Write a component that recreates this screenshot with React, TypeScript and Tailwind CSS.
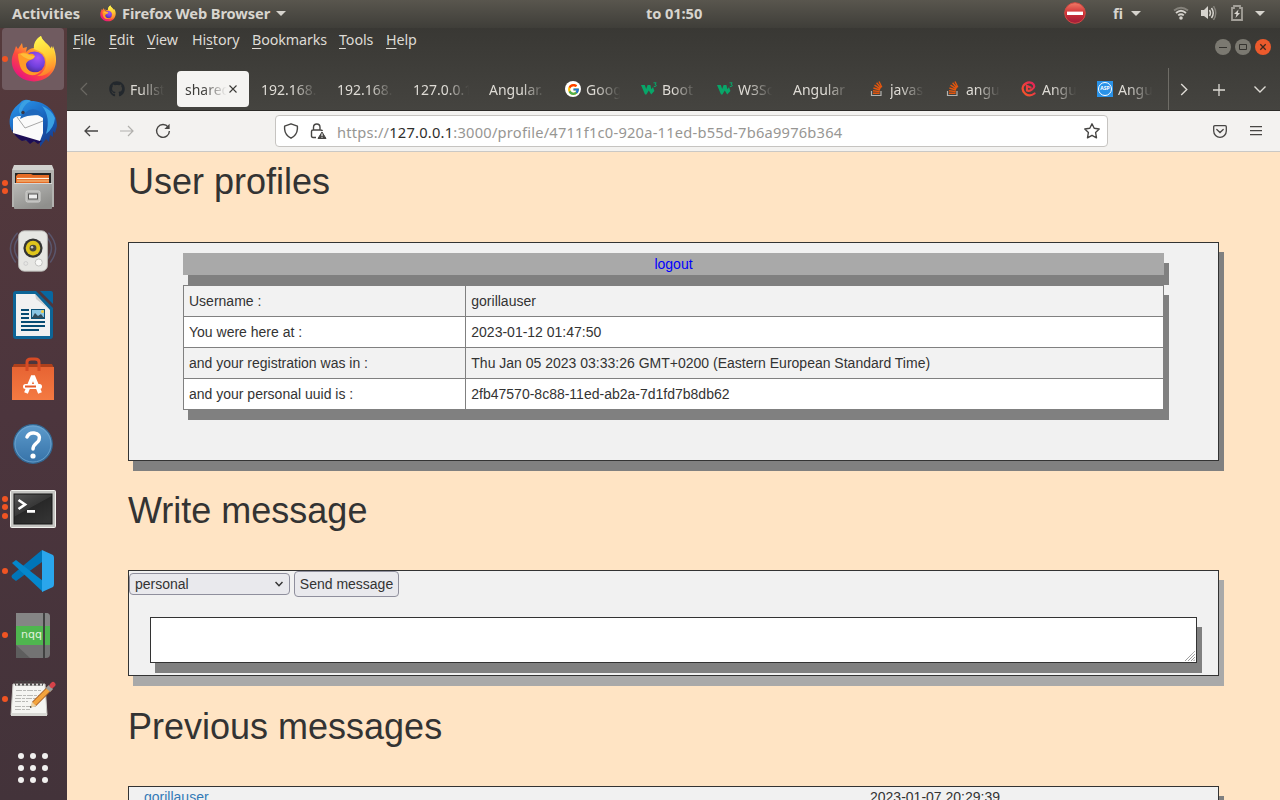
import React from "react";
import { FaGithub } from "react-icons/fa";
import { FcGoogle } from "react-icons/fc";

function FirefoxLogo({ id, className }: { id: string; className: string }) {
  return (
    <svg viewBox="0 0 46 48" className={className}>
      <defs>
        <linearGradient id={`${id}-body`} x1="0.85" y1="0.1" x2="0.25" y2="0.95">
          <stop offset="0" stopColor="#fff44f" />
          <stop offset="0.35" stopColor="#ffa32c" />
          <stop offset="0.65" stopColor="#ff4b3d" />
          <stop offset="1" stopColor="#e9167c" />
        </linearGradient>
        <radialGradient id={`${id}-globe`} cx="0.65" cy="0.3" r="0.8">
          <stop offset="0" stopColor="#a455f5" />
          <stop offset="0.55" stopColor="#7140dd" />
          <stop offset="1" stopColor="#452a8e" />
        </radialGradient>
        <linearGradient id={`${id}-flame`} x1="0.4" y1="0" x2="0.6" y2="1">
          <stop offset="0" stopColor="#fff650" />
          <stop offset="0.5" stopColor="#ffcd34" />
          <stop offset="1" stopColor="#ff7a2b" />
        </linearGradient>
      </defs>
      <path fill={`url(#${id}-body)`} d="M3 17L5 11L7 14L11 8L12 13L16 12L15 17C19 13 22 13 24 13C23 8 26 3 30 1C31 6 38 9 41 15L42 11C47 23 46 34 38 41C30 48 17 48 9 42C0 35-1 25 3 17Z" />
      <path fill={`url(#${id}-flame)`} d="M23 14C22 8 26 3 30 1C31 6 37 9 40 15L40 11C45 17 46 32 37 38C33 41 29 41 26 41C38 36 38 20 28 16Z" />
      <circle cx="23.5" cy="27" r="10.5" fill={`url(#${id}-globe)`} />
      <path fill="#ff9a27" d="M7 19C12 17 15 17 18 19C22 18 25 20 23 23C20 26 17 24 15 29C15 37 24 39 30 36C25 43 12 41 9 31C8 27 7 23 7 19Z" />
      <path fill="#ffbd38" d="M9 19Q14 17 18 20L24 21Q22 25 17 24Q13 23 9 19Z" />
    </svg>
  );
}

function ThunderbirdIcon() {
  return (
    <svg viewBox="0 0 48 48" className="size-12">
      <defs>
        <linearGradient id="tb" x1="0.2" y1="0" x2="0.8" y2="1">
          <stop offset="0" stopColor="#2a93e8" />
          <stop offset="0.5" stopColor="#1863bd" />
          <stop offset="1" stopColor="#163a8a" />
        </linearGradient>
      </defs>
      <path fill="url(#tb)" d="M11 4C14 0 18 0 22 2C36 2 48 12 48 27L46 34L44 32L44 38L41 36L40 43L37 40L31 48L31 42C18 44 8 39 3 32C-2 23 1 11 11 4Z" />
      <path fill="#1d0d55" d="M3 31L33 42L29 45L25 42L21 45L17 41L13 42Q6 38 3 31Z" />
      <path fill="#3aa0e3" d="M22 2C17 4 13 9 12 16C10 14 9 11 11 7C14 1 18 0 22 2ZM33 7Q42 18 37 35Q45 29 46 19Q43 11 33 7Z" />
      <path fill="#fafafa" d="M4 20Q6 17 11 17L29 16L34 19L34 34L31 42L4 34Z" />
      <path fill="none" stroke="#a8a8a8" strokeWidth="1" d="M8 18L16 29L34 22" />
      <path fill="#1f68bc" d="M12 17L20 11Q29 8 34 17Q22 14 11 20Z" />
      <circle cx="14" cy="13.5" r="1.7" fill="#3a3845" />
    </svg>
  );
}

function FilesIcon() {
  return (
    <svg viewBox="0 0 44 46" className="mb-[1px] h-[46px] w-11">
      <defs>
        <linearGradient id="fl" x1="0" y1="0" x2="0.6" y2="1">
          <stop offset="0" stopColor="#b9b9b7" />
          <stop offset="1" stopColor="#8f8f8c" />
        </linearGradient>
      </defs>
      <path fill="#d1d1ce" d="M3 1H41L43 6V43H1V6Z" />
      <path fill="#b3b3b0" d="M1 6H43V43H1Z" />
      <rect x="4" y="9" width="36" height="10" fill="#252525" />
      <path fill="#e66b25" d="M5 12L7 10H20L22 11H38V19H5Z" />
      <path stroke="#fff0dc" strokeWidth="1.2" d="M6 14.5H38" />
      <path stroke="#f6d096" strokeWidth="1" d="M6 17H38" />
      <rect x="3" y="19" width="38" height="26" rx="1" fill="url(#fl)" />
      <path stroke="#d6d6d4" d="M3 19.5H41" />
      <rect x="15" y="27" width="14" height="11" rx="1.5" fill="#b5b5b3" stroke="#d2d2d0" />
      <rect x="17.5" y="30" width="9" height="5" fill="#eee" stroke="#555" />
    </svg>
  );
}

function SpeakerIcon() {
  return (
    <svg viewBox="0 0 50 46" className="h-[46px] w-[50px]">
      <g fill="none" stroke="#667ca8" strokeWidth="1.5" opacity="0.45">
        <path d="M9 4Q-5 19 7 35" />
        <path d="M12 7Q0 19 11 33" />
        <path d="M41 4Q55 19 43 35" />
        <path d="M38 7Q50 19 39 33" />
      </g>
      <rect x="10" y="2" width="30" height="42" rx="6" fill="#e6e6e3" stroke="#b6b6b3" />
      <circle cx="25" cy="20" r="10" fill="#343434" />
      <circle cx="25" cy="20" r="7.6" fill="#dfc51c" />
      <circle cx="25" cy="20" r="3.6" fill="#48483d" />
      <circle cx="24" cy="19" r="1.3" fill="#c8c8c8" />
      <circle cx="31" cy="35" r="3.7" fill="#f8f8f6" stroke="#c0c0be" />
      <circle cx="17.5" cy="36" r="2" fill="none" stroke="#ccc" />
    </svg>
  );
}

function WriterIcon() {
  return (
    <svg viewBox="0 0 40 48" className="h-12 w-10">
      <path fill="#0d6597" d="M3 0H23L40 17V45Q40 48 37 48H3Q0 48 0 45V3Q0 0 3 0Z" />
      <path fill="#f1f1f1" d="M3 3H22L37 19V45H3Z" />
      <path fill="#cfcfcf" d="M22 3L37 19L23 8Z" />
      <path fill="#0867a0" d="M27 0H38Q40 0 40 3V13Z" />
      <g stroke="#074b72" strokeWidth="2">
        <path d="M8 19H16M8 23H16M8 27H16M8 31H32M8 35H32M8 39H26" />
      </g>
      <rect x="18" y="18" width="14" height="10" fill="#0d5279" />
      <rect x="19" y="19" width="12" height="7" fill="#8ac5e4" />
      <circle cx="29.5" cy="20.5" r="1.5" fill="#f4cd3e" />
      <path fill="#314b5a" d="M19 27L22 22L25 25L28 23L31 27Z" />
    </svg>
  );
}

function SoftwareIcon() {
  return (
    <svg viewBox="0 0 44 44" className="size-11">
      <defs>
        <linearGradient id="sw" x1="0" y1="0" x2="0" y2="1">
          <stop offset="0" stopColor="#e76433" />
          <stop offset="1" stopColor="#f47a42" />
        </linearGradient>
      </defs>
      <path fill="#ad401c" d="M3 7H41L43 11H1Z" />
      <path fill="url(#sw)" d="M1 10H43V43H1Z" />
      <path fill="none" stroke="#d64b25" strokeWidth="3" d="M16 14V5Q16 2 20 2H24Q28 2 28 5V14" />
      <g stroke="#fff" strokeWidth="4" fill="none" strokeLinejoin="bevel">
        <path d="M15 36L22 19L29 36" />
      </g>
      <rect x="12" y="27" width="19" height="5" rx="2.5" fill="#fff" />
      <path stroke="#e65b29" strokeWidth="2" d="M14 29.5H25" />
    </svg>
  );
}

function HelpIcon() {
  return (
    <svg viewBox="0 0 42 42" className="mt-[1px] size-[42px]">
      <defs>
        <linearGradient id="hp" x1="0" y1="0" x2="0" y2="1">
          <stop offset="0" stopColor="#5d9bcc" />
          <stop offset="1" stopColor="#3672a8" />
        </linearGradient>
      </defs>
      <circle cx="21" cy="21" r="19.3" fill="url(#hp)" stroke="#326792" strokeWidth="1.2" />
      <circle cx="21" cy="21" r="18" fill="none" stroke="#78acd3" strokeWidth="0.7" />
      <path fill="none" stroke="#fff" strokeWidth="3.5" strokeLinecap="round" d="M15 14Q17 9.5 22 10Q29 11 27 17C26 20 21 21 21 26" />
      <circle cx="21" cy="33" r="2.6" fill="#fff" />
    </svg>
  );
}

function TerminalIcon() {
  return (
    <svg viewBox="0 0 46 38" className="mt-1 h-[38px] w-[46px]">
      <defs>
        <linearGradient id="tm" x1="0" y1="0" x2="0.7" y2="1">
          <stop offset="0" stopColor="#555" />
          <stop offset="0.5" stopColor="#383838" />
          <stop offset="0.52" stopColor="#282828" />
          <stop offset="1" stopColor="#333" />
        </linearGradient>
      </defs>
      <rect x="0.5" y="0.5" width="45" height="37" rx="1" fill="#c5c5c2" stroke="#f2f2ee" />
      <rect x="4" y="4" width="38" height="30" fill="url(#tm)" stroke="#171717" />
      <path fill="none" stroke="#fff" strokeWidth="2.7" d="M8.5 10L15 14.5L8.5 19M17 21.3H25" />
    </svg>
  );
}

function CodeIcon() {
  return (
    <svg viewBox="0 0 44 44" className="size-11">
      <path fill="#0075b8" d="M31 1V13L5 32L1 29Q0 27 1 26Z" />
      <path fill="#0487cc" d="M1 14L5 11L32 32V43Z" />
      <path fill="#2aa6ec" d="M31 1L42 6Q43 7 43 9V35Q43 37 42 38L31 43Z" />
    </svg>
  );
}

function NqqIcon() {
  return (
    <div className="relative h-[45px] w-[34px] overflow-hidden rounded-r-[4px] bg-[#737373]">
      <svg viewBox="0 0 34 45" className="absolute inset-0">
        <path fill="#858585" d="M0 0H34V13H0Z" />
        <path fill="#5e5e5e" d="M0 32L14 45H0Z" />
      </svg>
      <div className="absolute inset-x-0 top-[13px] h-[19px] bg-[#4fb64f] pl-[5px] font-['DejaVu_Sans'] text-[11px] leading-[18px] text-[#e1f2de]">nqq</div>
      <div className="absolute inset-y-0 left-[27px] w-[2px] bg-[#414141]" />
    </div>
  );
}

function NotesIcon() {
  return (
    <svg viewBox="0 0 46 38" className="mb-[2px] h-[38px] w-[46px]">
      <path fill="#f5f5f2" stroke="#c9c8c3" d="M3 5H35L37 36H1Z" />
      <path fill="#d9d9d5" d="M1 34H37V37H1Z" />
      <g stroke="#4a4847" fill="none">
        <path d="M6 7Q4 2 7 2T8 7M10 7Q8 2 11 2T12 7M14 7Q12 2 15 2T16 7M18 7Q16 2 19 2T20 7M22 7Q20 2 23 2T24 7M26 7Q24 2 27 2T28 7M30 7Q28 2 31 2T32 7" />
      </g>
      <path stroke="#b9b9b6" strokeDasharray="6 1 3 1" d="M6 11.5H31M6 16.5H30M5 19.5H27M5 22.5H18M5 27.5H26M5 30.5H20" />
      <path stroke="#a25c26" strokeWidth="6" d="M24 25L40 9" />
      <path stroke="#f3a33c" strokeWidth="4" d="M24 25L40 9" />
      <path fill="#eed3a3" d="M22 23L26 27L20 29Z" />
      <path fill="#333" d="M20 27L22 28L20 29Z" />
      <path stroke="#9d9c9a" strokeWidth="6" d="M38 11L41 8" />
      <path stroke="#d64249" strokeWidth="5" strokeLinecap="round" d="M42 6.5L43 5.5" />
    </svg>
  );
}

const dockItems = [
  { icon: <ThunderbirdIcon />, windows: 0 },
  { icon: <FilesIcon />, windows: 2 },
  { icon: <SpeakerIcon />, windows: 0 },
  { icon: <WriterIcon />, windows: 0 },
  { icon: <SoftwareIcon />, windows: 0 },
  { icon: <HelpIcon />, windows: 0 },
  { icon: <TerminalIcon />, windows: 3 },
  { icon: <CodeIcon />, windows: 1 },
  { icon: <NqqIcon />, windows: 1 },
  { icon: <NotesIcon />, windows: 1 },
];

function Dots({ count }: { count: number }) {
  return (
    <div className="flex w-[9px] shrink-0 flex-col items-center gap-[2.5px]">
      {Array.from({ length: count }, (_, i) => (
        <span key={i} className="size-[6px] rounded-full bg-[#f05423]" />
      ))}
    </div>
  );
}

function Dock() {
  return (
    <nav className="flex w-[67px] shrink-0 flex-col bg-linear-to-b from-[#553a3c] via-[#4c353d] to-[#43333a]">
      <div className="flex h-[63px] shrink-0 items-start pl-[2px]">
        <div className="flex h-[62px] w-[62px] items-center rounded-[4px] bg-[#705b60]">
          <span className="mr-[3px] size-[6px] rounded-full bg-[#f05423]" />
          <FirefoxLogo id="ffdock" className="h-12 w-[46px]" />
        </div>
      </div>
      {dockItems.map((item, i) => (
        <div key={i} className="flex h-16 shrink-0 items-center">
          <Dots count={item.windows} />
          <div className="flex w-12 justify-center">{item.icon}</div>
        </div>
      ))}
      <div className="grid grid-cols-3 gap-[6px] self-start pt-[22px] pl-[18px]">
        {Array.from({ length: 9 }, (_, i) => (
          <span key={i} className="size-[6px] rounded-full bg-[#f1f0ef]" />
        ))}
      </div>
    </nav>
  );
}

function Caret() {
  return (
    <svg viewBox="0 0 10 5" className="h-[5px] w-[10px]">
      <path fill="#d6d3cd" d="M0 0H10L5 5Z" />
    </svg>
  );
}

function SystemBar() {
  return (
    <header className="grid h-[28px] shrink-0 grid-cols-[646px_1fr] items-center bg-linear-to-b from-[#59564e] to-[#3f3e39] pb-[2px] font-['Noto_Sans',sans-serif] text-[14.67px] leading-5 font-bold whitespace-nowrap text-[#d8d5cf]">
      <div className="flex items-center pl-3">
        <span className="w-[88px]">Activities</span>
        <FirefoxLogo id="fftop" className="h-[17px] w-4" />
        <span className="ml-[6px] w-[154px] tracking-[-0.1px]">Firefox Web Browser</span>
        <Caret />
      </div>
      <div className="flex items-center">
        <span className="w-[418px] tracking-[-0.1px]">to 01:50</span>
        <svg viewBox="0 0 22 22" className="size-[22px]">
          <defs>
            <linearGradient id="stop" x1="0" y1="0" x2="0" y2="1">
              <stop offset="0" stopColor="#f17c67" />
              <stop offset="0.5" stopColor="#cf3035" />
              <stop offset="1" stopColor="#9e1c3a" />
            </linearGradient>
          </defs>
          <circle cx="11" cy="11" r="10.3" fill="url(#stop)" stroke="#d34b43" />
          <path stroke="#fff" strokeWidth="3.4" d="M3 11.3H19" />
        </svg>
        <span className="ml-[27px] w-[18px]">fi</span>
        <Caret />
        <svg viewBox="0 0 16 14" className="ml-8 h-[14px] w-4" fill="none">
          <path stroke="#85827b" strokeWidth="1.8" d="M1 4.5Q8-1 15 4.5" />
          <path stroke="#d6d3cd" strokeWidth="1.8" d="M3 7Q8 2.5 13 7M5.2 9.4Q8 7 10.8 9.4" />
          <circle cx="8" cy="12" r="1.8" fill="#d6d3cd" />
        </svg>
        <svg viewBox="0 0 16 14" className="ml-3 h-[14px] w-4" fill="none">
          <path fill="#d6d3cd" d="M0 4H3L7 0V13L3 10H0Z" />
          <path stroke="#d6d3cd" strokeWidth="1.5" d="M8.5 4Q10.5 7 8.5 10M10.5 2Q14 7 10.5 12" />
          <path stroke="#85827b" strokeWidth="1.4" d="M12.5 0Q17 7 12.5 14" />
        </svg>
        <svg viewBox="0 0 12 16" className="ml-[14px] h-4 w-3">
          <path fill="none" stroke="#a3a099" strokeWidth="1.8" d="M1 3H3V1H9V3H11V15H1Z" />
          <path fill="#d6d3cd" d="M7.5 4.5L3 9H5.5L4.5 13L9 8H6.8Z" />
        </svg>
        <div className="ml-3"><Caret /></div>
      </div>
    </header>
  );
}

const menus = [
  { name: "File", size: "w-9" },
  { name: "Edit", size: "w-[38px]" },
  { name: "View", size: "w-[45px]" },
  { name: "History", size: "w-[60px]", mark: 2 },
  { name: "Bookmarks", size: "w-[87px]" },
  { name: "Tools", size: "w-[47px]" },
  { name: "Help", size: "w-10" },
];

function MenuBar() {
  return (
    <div className="flex h-[40px] shrink-0 justify-between pl-[6px]">
      <div className="flex pt-[2px] text-[14.3px] leading-5 tracking-[-0.1px]">
        {menus.map(({ name, size, mark = 0 }) => (
          <span key={name} className={size}>
            {name.slice(0, mark)}
            <span className="underline decoration-1 underline-offset-[3px]">{name[mark]}</span>
            {name.slice(mark + 1)}
          </span>
        ))}
      </div>
      <div className="flex gap-1 pt-[11px] pr-[9px]">
        <svg viewBox="0 0 16 16" className="size-4">
          <circle cx="8" cy="8" r="8" fill="#7b7971" />
          <path stroke="#34332f" d="M4 8.5H12" />
        </svg>
        <svg viewBox="0 0 16 16" className="size-4">
          <circle cx="8" cy="8" r="8" fill="#7b7971" />
          <path fill="none" stroke="#34332f" d="M4.5 5.5H11.5V10.5H4.5Z" />
        </svg>
        <svg viewBox="0 0 16 16" className="size-4">
          <circle cx="8" cy="8" r="8" fill="#ec5a2c" />
          <path stroke="#3d281e" strokeWidth="1.3" d="M5.3 5.3L10.7 10.7M10.7 5.3L5.3 10.7" />
        </svg>
      </div>
    </div>
  );
}

function W3Icon() {
  return (
    <svg viewBox="0 0 16 14" className="h-[14px] w-4">
      <path fill="#08a669" d="M0 3H3.8L5.2 7L6.6 3H9.4L10.4 7.2L12 5L13.4 9L10.2 12.5L7.8 8.6L5.4 12.5H4Z" />
      <path fill="none" stroke="#08a669" strokeWidth="1" d="M12.5 0.8H15.2L14 2.4Q15.6 2.6 15.2 4Q14.4 5 12.8 4.3" />
    </svg>
  );
}

const google = (
  <span className="flex size-4 items-center justify-center rounded-full bg-white">
    <FcGoogle size={13} />
  </span>
);

const overflow = (
  <svg viewBox="0 0 16 16" className="size-4" fill="none">
    <path stroke="#b4b3b0" strokeWidth="1.2" d="M3 10.5V15H12.5V10.5" transform="translate(-0.5 -0.5)" />
    <path stroke="#e4560e" strokeWidth="1.4" d="M4 12.2H10.6M4 9.8L10.7 10.6M4.4 7L11 9M5.5 4.2L11.4 7.9M7.6 1.8L12 7M10 0.5L12.8 6.3" />
  </svg>
);

const course = (
  <svg viewBox="0 0 16 16" className="size-4">
    <defs>
      <linearGradient id="crs" x1="1" y1="0" x2="0" y2="1">
        <stop offset="0" stopColor="#e2205a" />
        <stop offset="1" stopColor="#fa5a24" />
      </linearGradient>
    </defs>
    <path fill="none" stroke="url(#crs)" strokeWidth="2.2" strokeLinecap="round" d="M13.5 12.5Q9 16 4.5 13Q0 9 2.5 4.5Q6 0 11 2Q15.5 5 11 8.5Q8.5 10.5 6 9.5V5L9.5 6.5" />
  </svg>
);

const asp = (
  <span className="flex size-4 items-center justify-center bg-[#2992e8]">
    <span className="flex size-[14px] items-center justify-center rounded-full border border-white text-[5px] font-bold text-white">ASP</span>
  </span>
);

const tabs: { label: string; icon?: React.ReactNode; active?: boolean }[] = [
  { label: "Fullst", icon: <FaGithub size={16} className="text-[#23282d]" /> },
  { label: "shared", active: true },
  { label: "192.168." },
  { label: "192.168." },
  { label: "127.0.0.1" },
  { label: "Angular." },
  { label: "Goog", icon: google },
  { label: "Boot", icon: <W3Icon /> },
  { label: "W3Sc", icon: <W3Icon /> },
  { label: "Angular" },
  { label: "javas", icon: overflow },
  { label: "angu", icon: overflow },
  { label: "Angu", icon: course },
  { label: "Angu", icon: asp },
];

function TabStrip() {
  return (
    <div className="flex h-[43px] shrink-0 border-b border-[#2c2b28] text-[14px] whitespace-nowrap">
      <div className="flex w-[34px] items-center justify-center">
        <svg viewBox="0 0 8 14" className="h-[14px] w-2" fill="none">
          <path stroke="#6b6963" strokeWidth="1.2" d="M7 1L1 7L7 13" />
        </svg>
      </div>
      <div className="flex w-[1067px] items-center">
        {tabs.map((tab, i) => (
          <div
            key={i}
            className={
              tab.active
                ? "mr-1 flex h-[36px] w-[72px] shrink-0 items-center rounded-[4px] bg-[#f5f4f2] pl-2 text-[#3e3d3a]"
                : "mr-1 flex h-[36px] w-[72px] shrink-0 items-center pl-2"
            }
          >
            {tab.icon && <span className="mr-[5px] flex w-4 shrink-0">{tab.icon}</span>}
            <span
              className={
                tab.active
                  ? "w-[44px] overflow-hidden mask-[linear-gradient(to_right,black_40%,transparent_95%)]"
                  : tab.icon
                    ? "w-[35px] overflow-hidden mask-[linear-gradient(to_right,black_30%,transparent_98%)]"
                    : "w-[56px] overflow-hidden mask-[linear-gradient(to_right,black_60%,transparent_100%)]"
              }
            >
              {tab.label}
            </span>
            {tab.active && (
              <svg viewBox="0 0 8 8" className="size-2">
                <path stroke="#3b3a37" strokeWidth="1.1" d="M0.5 0.5L7.5 7.5M7.5 0.5L0.5 7.5" />
              </svg>
            )}
          </div>
        ))}
      </div>
      <div className="flex items-center border-l border-[#6f6d67] pt-[1px] pl-[11px]">
        <svg viewBox="0 0 8 14" className="h-[13px] w-2" fill="none">
          <path stroke="#dedbd5" strokeWidth="1.5" d="M1 1L7 7L1 13" />
        </svg>
        <svg viewBox="0 0 12 12" className="ml-[25px] size-3" fill="none">
          <path stroke="#dedbd5" strokeWidth="1.3" d="M6 0V12M0 6H12" />
        </svg>
        <svg viewBox="0 0 12 7" className="ml-[29px] h-[7px] w-3" fill="none">
          <path stroke="#dedbd5" strokeWidth="1.4" d="M0.5 0.5L6 6L11.5 0.5" />
        </svg>
      </div>
    </div>
  );
}

function AddressBar() {
  return (
    <div className="flex h-[41px] shrink-0 items-center border-b border-[#cac8c5] bg-[#f3f2f0]">
      <svg viewBox="0 0 14 12" className="ml-[17px] h-3 w-[14px]" fill="none">
        <path stroke="#474644" strokeWidth="1.3" d="M14 6H1M6 1L1 6L6 11" />
      </svg>
      <svg viewBox="0 0 14 12" className="ml-[22px] h-3 w-[14px]" fill="none">
        <path stroke="#b1b0ad" strokeWidth="1.2" d="M0 6H13M8 1L13 6L8 11" />
      </svg>
      <svg viewBox="0 0 16 16" className="ml-[21px] size-4" fill="none">
        <path stroke="#474644" strokeWidth="1.4" d="M13.2 4.2A6.4 6.4 0 1 0 14.4 8" />
        <path fill="#474644" d="M14.6 0.8V6H9.4Z" />
      </svg>
      <div className="ml-[104px] flex h-[32px] w-[833px] items-center rounded-[4px] border border-[#c6c4c1] bg-white">
        <svg viewBox="0 0 16 16" className="ml-[7px] size-4" fill="none">
          <path stroke="#474644" strokeWidth="1.4" strokeLinejoin="round" d="M8 0.8L14.4 3.2V6Q14 12 8 15.2Q2 12 1.6 6V3.2Z" />
        </svg>
        <svg viewBox="0 0 17 17" className="ml-[11px] h-[17px] w-[17px]" fill="none">
          <path stroke="#474644" strokeWidth="1.4" d="M6 14.5H3Q1.5 14.5 1.5 13V8.5Q1.5 7 3 7H10.5Q12 7 12.5 8M3.5 7V4.5Q3.5 1 6.8 1Q10 1 10 4.5V7" />
          <path fill="#474644" stroke="#474644" strokeLinejoin="round" d="M12 9L16 15.5H8Z" />
          <path stroke="#fff" strokeWidth="1.1" d="M12 10.5V13M12 13.7V14.7" />
        </svg>
        <span className="ml-[10px] w-[747px] pt-[1px] text-[14.67px] leading-5 tracking-[0.22px] whitespace-nowrap text-[#979693]">
          https://<span className="text-[#2f2e2c]">127.0.0.1</span>:3000/profile/4711f1c0-920a-11ed-b55d-7b6a9976b364
        </span>
        <svg viewBox="0 0 16 16" className="size-4" fill="none">
          <path stroke="#474644" strokeWidth="1.4" strokeLinejoin="round" d="M8 0.8L10.2 5.3L15.2 6L11.6 9.5L12.5 14.8L8 12.3L3.5 14.8L4.4 9.5L0.8 6L5.8 5.3Z" />
        </svg>
      </div>
      <svg viewBox="0 0 14 13" className="ml-[105px] h-[13px] w-[14px]" fill="none">
        <path stroke="#474644" strokeWidth="1.3" strokeLinejoin="round" d="M1.8 0.7H12.2Q13.3 0.7 13.3 1.8V6A6.3 6.3 0 0 1 0.7 6V1.8Q0.7 0.7 1.8 0.7Z" />
        <path stroke="#474644" strokeWidth="1.3" strokeLinecap="round" d="M3.8 4.5L7 7.5L10.2 4.5" />
      </svg>
      <svg viewBox="0 0 12 10" className="ml-[23px] h-[10px] w-3">
        <path stroke="#474644" strokeWidth="1.3" d="M0 0.7H12M0 4.7H12M0 8.7H12" />
      </svg>
    </div>
  );
}

const profile = [
  ["Username :", "gorillauser"],
  ["You were here at :", "2023-01-12 01:47:50"],
  ["and your registration was in :", "Thu Jan 05 2023 03:33:26 GMT+0200 (Eastern European Standard Time)"],
  ["and your personal uuid is :", "2fb47570-8c88-11ed-ab2a-7d1fd7b8db62"],
];

function ProfilePage() {
  return (
    <main className="min-h-0 flex-1 overflow-hidden bg-[#ffe4c4] pt-[10px] pr-[61px] pl-[61px] font-['Liberation_Sans',Arial,sans-serif] text-[14px] leading-5 text-[#333]">
      <h1 className="mb-10 text-[36px] leading-10">User profiles</h1>
      <section className="h-[219px] w-[1091px] border border-[#333] bg-[#f1f1f1] pt-[10px] pl-[54px] shadow-[5px_10px_#808080]">
        <div className="h-[22px] w-[981px] bg-[#a9a9a9] text-center leading-[22px] text-[#0000ff] shadow-[5px_10px_#808080]">logout</div>
        <div className="relative mt-[10px] w-[981px] border-t border-l border-[#808080] bg-white shadow-[5px_10px_#808080]">
          {profile.map(([name, value], i) => (
            <div
              key={name}
              className={i % 2 === 0 ? "grid h-[31px] grid-cols-[282px_1fr] bg-[#f2f2f2]" : "grid h-[31px] grid-cols-[282px_1fr] bg-white"}
            >
              <span className="border-r border-b border-[#808080] pl-[5px] leading-[30px]">{name}</span>
              <span className="border-r border-b border-[#808080] pl-[5.3px] leading-[30px]">{value}</span>
            </div>
          ))}
        </div>
      </section>
      <h1 className="mt-[30px] mb-[39px] text-[36px] leading-10">Write message</h1>
      <section className="h-[106px] w-[1091px] border border-[#333] bg-[#f1f1f1] shadow-[5px_10px_#a9a9a9]">
        <div className="flex items-start">
          <button className="mt-[2px] flex h-[22px] w-[161px] items-center justify-between rounded-[4px] border border-[#8f8f9d] bg-[#e9e9ed] pr-[6px] pl-[5px]">
            personal
            <svg viewBox="0 0 8 6" className="h-[6px] w-2" fill="none">
              <path stroke="#333" strokeWidth="1.5" d="M0.5 1L4 4.7L7.5 1" />
            </svg>
          </button>
          <button className="ml-1 h-[26px] w-[105px] rounded-[4px] border border-[#8f8f9d] bg-[#e9e9ed] text-center whitespace-nowrap">Send message</button>
        </div>
        <div className="mt-5 ml-[21px] flex h-[46px] w-[1047px] items-end justify-end border border-[#333] bg-white p-[1px] shadow-[5px_10px_#808080]">
          <svg viewBox="0 0 10 10" className="size-[10px]">
            <path stroke="#777" strokeDasharray="1 0.5" d="M0 10L10 0M3 10L10 3M6 10L10 6M8.5 10L10 8.5" />
          </svg>
        </div>
      </section>
      <h1 className="mt-[31px] mb-[39px] text-[36px] leading-10">Previous messages</h1>
      <section className="flex h-[219px] w-[1091px] border border-[#333] bg-[#f1f1f1] pl-[15px] shadow-[5px_10px_#808080]">
        <span className="w-[726px] text-[#337ab7]">gorillauser</span>
        <span>2023-01-07 20:29:39</span>
      </section>
    </main>
  );
}

export default function App() {
  return (
    <div className="flex h-[800px] w-[1280px] flex-col overflow-hidden">
      <SystemBar />
      <div className="flex min-h-0 flex-1">
        <Dock />
        <div className="flex w-[1213px] flex-col">
          <div className="bg-linear-to-b from-[#393834] to-[#454440] font-['Noto_Sans',sans-serif] text-[#dedbd5]">
            <MenuBar />
            <TabStrip />
          </div>
          <div className="shrink-0 font-['Noto_Sans',sans-serif]">
            <AddressBar />
          </div>
          <ProfilePage />
        </div>
      </div>
    </div>
  );
}
